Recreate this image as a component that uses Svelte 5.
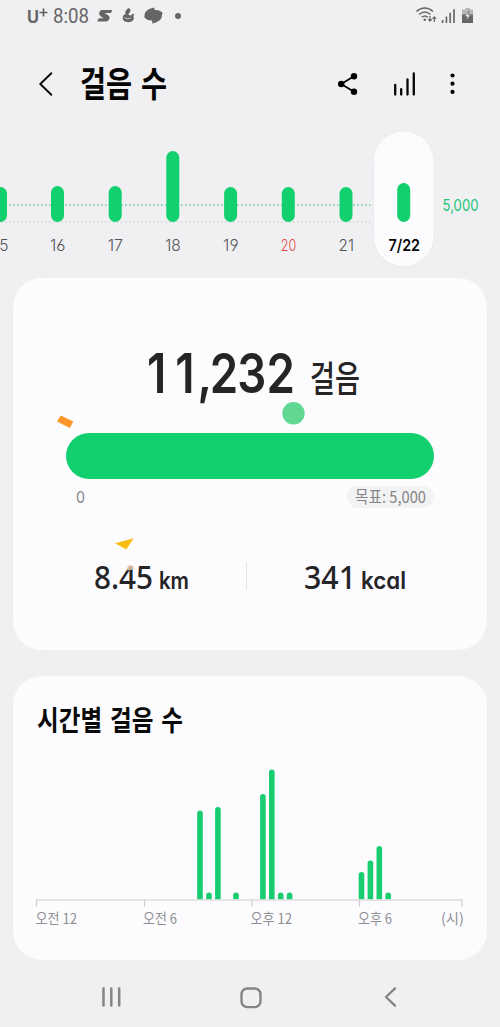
<script>
  const days = [
    { x: 0.5, top: 57, label: '15', color: '#555558' },
    { x: 57.5, top: 56, label: '16', color: '#555558' },
    { x: 115.2, top: 56, label: '17', color: '#555558' },
    { x: 172.8, top: 21, label: '18', color: '#555558' },
    { x: 230.6, top: 57, label: '19', color: '#555558' },
    { x: 288.3, top: 57, label: '20', color: '#e04848' },
    { x: 346, top: 57, label: '21', color: '#555558' }
  ];
  const hours = [
    [200, 89], [209, 7], [217.9, 92.5], [236, 7], [262.9, 105.5], [271.8, 130],
    [280.7, 7], [289.6, 7], [361.5, 27.5], [370.4, 39], [379.3, 53.5], [388.2, 7]
  ];
  const ticks = [36.5, 144.5, 251.8, 359.5, 462];
  const totalColumns = [0, 28.3, 50.5, 62.8, 90.3, 119.6].map((x) => x / 0.83).join(' ');
</script>

{#snippet fit(text, width, height, size, cls)}
  <svg class="fit {cls}" {width} {height} viewBox="0 0 {width} {height}">
    <text x="0" y={height} font-size={size} textLength={width} lengthAdjust="spacingAndGlyphs">{text}</text>
  </svg>
{/snippet}

<div class="screen">
  <header class="status">
    <div class="status-left">
      <span class="carrier">{@render fit('U', 12, 12, 17, 'bold')}<svg width="9" height="9" viewBox="0 0 9 9"><path d="M4.5 .5v8M.5 4.5h8" stroke="#626264" stroke-width="1.7" /></svg></span>
      <span class="clock">{@render fit('8:08', 36, 14, 19.5, 'robo')}</span>
      <svg class="s-app" width="16" height="14" viewBox="0 0 16 14"><path d="M4.800 1H15.300l-1.300 3H7.600L11.500 6.400c2.500 1.900.4 6.100-3 6.100H.2l1.500-3.200h5L3.900 7.500C1.300 5.500 1.800 1.800 4.800 1Z" fill="#656567" /></svg>
      <svg class="y-app" width="13" height="15" viewBox="0 0 13 15"><path d="M6 .3c2.400-.3 3 2 2.200 3.400-.7 1-2 1.800-1.500 3.200l2.300.6 1.400-1.800 1.800.5-.9 2c1.600 3-1 6-5 6C3 14.200.5 12.300.7 9.500c0-2 1.200-3.300 3-3.300-.8-2-.4-3.300.5-4Z" fill="#656567" /><path d="M2.500 9.500c1.800 1.500 4.500 1.600 6.500.2" stroke="#f0f0f2" fill="none" stroke-width=".7" /></svg>
      <svg class="p-app" width="19" height="17" viewBox="0 0 19 17"><path d="M10.500.4C5.500 1.200.6 3.600.6 8c0 .9-.2 1.500-.5 2 2 2.700 5 3.600 8 3.400L8.300 16.500C13.500 15.400 17.900 12.800 17.900 8.500c0-1 .3-1.600.9-2.200-2-2.500-5-3.500-8.300-3.200Z" fill="#656567" /></svg>
      <i class="dot"></i>
    </div>
    <svg width="60" height="18" viewBox="0 0 60 18" fill="none" stroke="#68686a">
      <path d="M1.500 4.500C6.500-.2 13-.2 18 4.500M4.200 7.500c3.500-3.200 7.800-3.200 11.300 0M6.800 10.300c2-1.700 4.200-1.700 6.200 0" stroke-width="1.500" />
      <circle cx="9.800" cy="12.700" r="1.300" fill="#68686a" stroke="none" />
      <path d="M15 9v5.200M13.200 12.200l1.800 2 1.800-2M19.300 15V10M17.500 11.800l1.800-2 1.800 2" stroke-width="1.200" />
      <path d="M27.600 13v3M31.400 9.500V16M35.200 5.700V16M39 2.200V16" stroke-width="1.700" />
      <path d="M50.500 1h4.500v1.500h3V9H47V2.500h3.500Z" fill="#b7b7ba" stroke="none" />
      <path d="M47 7.500h11V16H47Z" fill="#68686a" stroke="none" />
      <path d="M54 4 49.800 9.300l2.500.4-1 3.700 4.200-5.200-2.500-.4Z" fill="#f5f5f7" stroke="#68686a" stroke-width=".7" />
    </svg>
  </header>

  <nav class="toolbar">
    <svg class="back" width="14" height="24" viewBox="0 0 14 24"><path d="M12.300 1.200 1.300 12l11 10.800" fill="none" stroke="#0a0a0b" stroke-width="1.900" stroke-linecap="round" stroke-linejoin="round" /></svg>
    <h1>{@render fit('걸음 수', 87, 29, 35.500, 'bold ko gap')}</h1>
    <svg class="share" width="20" height="22" viewBox="0 0 20 22"><path d="M16 3.300 3.200 11 16 18.700" stroke="#050505" stroke-width="1.800" fill="none" /><circle cx="16" cy="3.300" r="3.200" /><circle cx="3.200" cy="11" r="3.200" /><circle cx="16" cy="18.700" r="3.200" /></svg>
    <svg class="stats" width="23" height="24" viewBox="0 0 23 24"><path d="M2.200 13v9.500M8.200 17.200v5.300M14.500 7.500v15M20.800 1.500v21" stroke="#050505" stroke-width="2.300" stroke-linecap="round" /></svg>
    <svg class="more" width="5" height="22" viewBox="0 0 5 22"><circle cx="2.500" cy="2.500" r="2.100" /><circle cx="2.500" cy="10.700" r="2.100" /><circle cx="2.500" cy="18.900" r="2.100" /></svg>
  </nav>

  <section class="week">
    <svg width="500" height="148" viewBox="0 0 500 148">
      <path d="M1 75.200H373" stroke="#51b994" stroke-width="1.300" stroke-dasharray="1.500 2.500" />
      <path d="M1 92H373" stroke="#cacacd" stroke-width="1.200" stroke-dasharray="1.500 2.500" />
      <rect x="373.500" y="1" width="60.500" height="135.500" rx="30.200" fill="#fcfcfe" stroke="#e9e9ec" stroke-width=".8" />
      {#each days as d}
        <rect x={d.x - 6.500} y={d.top} width="13" height={92 - d.top} rx="6.500" fill="#12d06e" />
        <text x={d.x - 7.500} y="120.500" font-size="16.500" textLength="15.500" lengthAdjust="spacingAndGlyphs" fill={d.color}>{d.label}</text>
      {/each}
      <rect x="397.200" y="53" width="13" height="39" rx="6.500" fill="#12d06e" />
      <text x="388.500" y="120.500" font-size="16.500" font-weight="600" textLength="31.500" lengthAdjust="spacingAndGlyphs" fill="#050505">7/22</text>
      <text x="442.500" y="80.500" font-size="16.500" font-weight="400" textLength="36" lengthAdjust="spacingAndGlyphs" fill="#20c477">5,000</text>
    </svg>
  </section>

  <main>
    <section class="card summary">
      <div class="total">
        <svg class="fit semi" width="148" height="40" viewBox="0 0 148 40">
          <text x={totalColumns} y="40" font-size="55" transform="scale(.83 1)">11,232</text>
        </svg>
        {@render fit('걸음', 50, 39, 36, 'medium ko')}
      </div>
      <div class="progress"></div>
      <div class="range">
        <span>{@render fit('0', 9, 12, 16.500, '')}</span>
        <span class="goal">{@render fit('목표: 5,000', 71, 12, 16.500, 'ko')}</span>
      </div>
      <div class="facts">
        <div class="fact distance">{@render fit('8.45', 59, 24, 33, 'medium plain')}{@render fit('km', 30, 24, 24, 'semi')}</div>
        <div class="fact energy">{@render fit('341', 52, 24, 33, 'medium plain')}{@render fit('kcal', 45, 24, 24, 'semi')}</div>
      </div>
      <svg class="confetti" width="474" height="372" viewBox="13 278 474 372">
        <path d="m60.800 415.500 12.500 6-3.500 6.500-12.800-6.500Z" fill="#fb962b" />
        <circle cx="293.500" cy="413.300" r="11.200" fill="#61d794" />
        <path d="m115 543.300 18.800-5-7.500 11.200Z" fill="#f9bd13" />
        <path d="m126.500 567 3.500-3 5.500 5-8 1.500Z" fill="#f9d5b8" opacity=".8" />
      </svg>
    </section>

    <section class="card hourly">
      <h2>{@render fit('시간별 걸음 수', 146, 23, 28, 'bold ko gap')}</h2>
      <svg class="chart" width="474" height="180" viewBox="13 760 474 180">
        {#each hours as [x, h]}
          <path d="M{x - 2.800} 899.500v{-h + 2.800}a2.800 2.800 0 0 1 5.600 0v{h - 2.800}Z" fill="#18cd70" />
        {/each}
        <path d="M36 900H463" stroke="#dcdcde" stroke-width="1.500" />
        {#each ticks as x}<path d="M{x} 900v6.500" stroke="#cfcfd2" stroke-width="1.300" />{/each}
        <g font-size="14.500" fill="#8f8f93" class="ko">
          <text x="35.500" y="924" textLength="41.500" lengthAdjust="spacingAndGlyphs">오전 12</text>
          <text x="143" y="924" textLength="34" lengthAdjust="spacingAndGlyphs">오전 6</text>
          <text x="250.500" y="924" textLength="41.500" lengthAdjust="spacingAndGlyphs">오후 12</text>
          <text x="358" y="924" textLength="34" lengthAdjust="spacingAndGlyphs">오후 6</text>
          <text x="441" y="923.500" textLength="23" lengthAdjust="spacingAndGlyphs">(시)</text>
        </g>
      </svg>
    </section>
  </main>

  <footer>
    <svg width="19" height="20" viewBox="0 0 19 20"><path d="M1.500 1.500v17M9.300 1.500v17M17.200 1.500v17" stroke="#858588" stroke-width="2.500" stroke-linecap="round" /></svg>
    <svg width="22" height="22" viewBox="0 0 22 22"><rect x="1.500" y="1.500" width="19" height="18.600" rx="5.800" fill="none" stroke="#858588" stroke-width="2.400" /></svg>
    <svg width="13" height="20" viewBox="0 0 13 20"><path d="M11 1.300 2 10l9 8.700" fill="none" stroke="#858588" stroke-width="2.300" stroke-linecap="round" stroke-linejoin="round" /></svg>
  </footer>
</div>

<style>
  :global(body) { margin: 0; background: #f0f0f2; }
  .screen {
    width: 500px; height: 1027px; overflow: hidden; background: #f0f0f2;
    font-family: Inter, "Noto Sans CJK KR", sans-serif;
    font-feature-settings: "cv02", "cv03", "cv04", "cv11";
    display: flex; flex-direction: column;
  }
  svg { display: block; flex: none; }
  h1, h2 { margin: 0; }
  .fit { overflow: visible; fill: currentColor; }
  .bold { font-weight: 700; }
  .semi { font-weight: 600; }
  .medium { font-weight: 500; }
  .plain { font-family: "Noto Sans", sans-serif; }
  .ko { font-family: "Noto Sans CJK KR", sans-serif; }
  .gap { word-spacing: 3px; }
  .robo { font-family: Roboto, sans-serif; }
  .status { height: 34px; display: flex; justify-content: space-between; padding: 0 26px 0 27px; color: #666668; }
  .status > svg { margin-top: 7px; margin-right: -1px; }
  .status-left { display: flex; align-items: flex-start; }
  .carrier { display: flex; margin-top: 8px; }
  .carrier > :global(svg:first-child) { margin-top: 3px; }
  .clock { margin: 9px 0 0 5px; }
  .s-app { margin: 9px 0 0 8px; }
  .y-app { margin: 8px 0 0 9px; }
  .p-app { margin: 7px 0 0 9px; }
  .dot { width: 6px; height: 6px; border-radius: 50%; background: #656567; margin: 13px 0 0 12px; }
  .toolbar { height: 96px; display: flex; align-items: flex-start; padding-left: 39px; }
  .back { margin-top: 38px; }
  .toolbar h1 { margin: 34px 0 0 27px; color: #050505; }
  .share { margin: 39px 0 0 171px; }
  .stats { margin: 38px 0 0 35px; }
  .more { margin: 39px 0 0 34px; }
  .week { height: 148px; font-weight: 350; }
  main { display: flex; flex-direction: column; gap: 26px; padding: 0 13px; }
  .card { background: #fcfcfe; border-radius: 29px; position: relative; }
  .summary { height: 372px; color: #252527; }
  .total { display: flex; gap: 15px; padding: 75px 0 0 134px; }
  .progress { margin: 40px 53px 0; height: 46px; border-radius: 23px; background: #12d06e; }
  .range { display: flex; justify-content: space-between; align-items: center; height: 22px; margin: 7px 53px 0 63px; color: #858588; }
  .goal { background: #f3f3f4; border-radius: 11px; padding: 5px 8px; }
  .facts { display: flex; margin-top: 54px; height: 28px; }
  .fact { display: flex; gap: 6px; width: 234px; box-sizing: border-box; }
  .distance { padding-left: 81px; border-right: 1px solid #e4e4e7; }
  .energy { padding-left: 57px; gap: 5px; }
  .fact > :global(svg) { margin-top: 3px; }
  .confetti { position: absolute; inset: 0; }
  .hourly { height: 284px; }
  .hourly h2 { padding: 32px 0 0 24px; color: #0a0a0b; }
  .chart { margin-top: 29px; }
  footer { display: flex; align-items: flex-start; padding: 27px 0 0 102px; }
  footer svg:nth-child(2) { margin: 0 122px 0 119px; }
</style>
